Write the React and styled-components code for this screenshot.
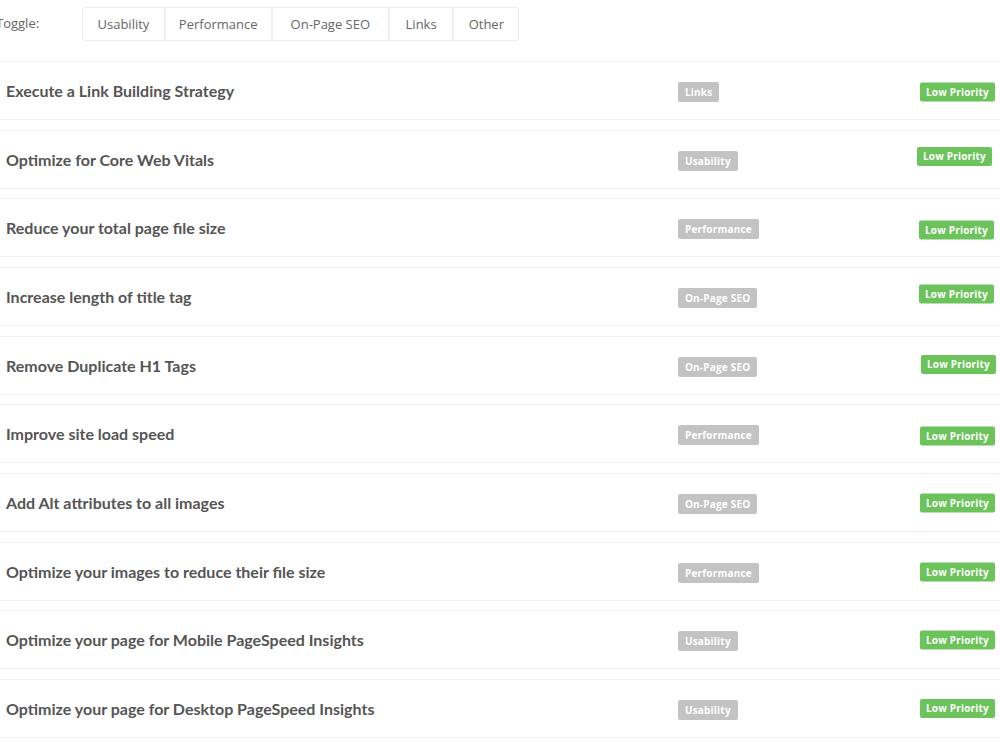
import React from 'react';
import styled, { createGlobalStyle } from 'styled-components';

const GlobalStyle = createGlobalStyle`
  html, body {
    margin: 0;
    padding: 0;
    background: #fff;
  }
  body {
    font-family: "Open Sans", "Liberation Sans", sans-serif;
    overflow: hidden;
  }
`;

const Page = styled.div`
  width: 1000px;
  overflow: hidden;
`;

const ToggleBar = styled.div`
  display: flex;
  align-items: flex-start;
  height: 61px;
  box-sizing: border-box;
  padding-top: 7px;
`;

const ToggleLabel = styled.span`
  width: 86px;
  margin-left: -4px;
  padding-top: 7px;
  font-size: 13px;
  color: #666;
`;

const ButtonGroup = styled.div`
  display: flex;
  border: 1px solid #ebebeb;
  border-radius: 3px;
  height: 34px;
  box-sizing: border-box;
`;

const ToggleButton = styled.button`
  font-family: "Open Sans", "Liberation Sans", sans-serif;
  font-size: 13px;
  color: #666;
  background: #fff;
  border: none;
  border-left: ${p => (p.first ? 'none' : '2px solid #efefef')};
  padding: 0 ${p => p.pad}px;
  cursor: pointer;
`;

const TaskList = styled.div`
  display: flex;
  flex-direction: column;
`;

const TaskRow = styled.div`
  display: flex;
  align-items: center;
  height: 59px;
  box-sizing: border-box;
  margin-bottom: 9.67px;
  border-top: 1px solid #f0f0f0;
  border-bottom: 1px solid #f0f0f0;
  padding: 0 5px 0 6px;
`;

const TaskTitle = styled.div`
  flex: 1;
  font-family: "Lato", "Liberation Sans", sans-serif;
  font-weight: 700;
  font-size: 16px;
  color: #555;
`;

const CategoryCell = styled.div`
  width: 242px;
`;

const Badge = styled.span`
  display: inline-block;
  font-family: "Open Sans", "Liberation Sans", sans-serif;
  font-weight: 700;
  font-size: 10px;
  letter-spacing: 0.2px;
  color: #fff;
  border-radius: 2px;
  box-sizing: border-box;
  line-height: 20px;
  height: 20px;
  padding: 0 7px;
`;

const CategoryBadge = styled(Badge)`
  background: #c3c3c3;
`;

const PriorityBadge = styled(Badge)`
  background: #6cc35b;
  height: 19px;
  line-height: 19px;
  padding: 0 6px;
`;

const buttons = [
  { label: 'Usability', pad: 14.5 },
  { label: 'Performance', pad: 13 },
  { label: 'On-Page SEO', pad: 18 },
  { label: 'Links', pad: 15.5 },
  { label: 'Other', pad: 14.5 },
];

const tasks = [
  { title: 'Execute a Link Building Strategy', category: 'Links', dx: 0, dy: 1.5 },
  { title: 'Optimize for Core Web Vitals', category: 'Usability', dx: -3, dy: -3 },
  { title: 'Reduce your total page file size', category: 'Performance', dx: -1, dy: 2.5 },
  { title: 'Increase length of title tag', category: 'On-Page SEO', dx: -1, dy: -2.5 },
  { title: 'Remove Duplicate H1 Tags', category: 'On-Page SEO', dx: 1, dy: -1 },
  { title: 'Improve site load speed', category: 'Performance', dx: 0, dy: 2.5 },
  { title: 'Add Alt attributes to all images', category: 'On-Page SEO', dx: 0, dy: 0.5 },
  { title: 'Optimize your images to reduce their file size', category: 'Performance', dx: 0, dy: 0.5 },
  { title: 'Optimize your page for Mobile PageSpeed Insights', category: 'Usability', dx: 0, dy: 0.5 },
  { title: 'Optimize your page for Desktop PageSpeed Insights', category: 'Usability', dx: 0, dy: 0 },
];

const App = () => {
  return (
    <Page>
      <GlobalStyle />
      <ToggleBar>
        <ToggleLabel>Toggle:</ToggleLabel>
        <ButtonGroup>
          {buttons.map((b, i) => (
            <ToggleButton key={b.label} first={i === 0} pad={b.pad}>
              {b.label}
            </ToggleButton>
          ))}
        </ButtonGroup>
      </ToggleBar>

      <TaskList>
        {tasks.map(task => (
          <TaskRow key={task.title}>
            <TaskTitle>{task.title}</TaskTitle>
            <CategoryCell>
              <CategoryBadge>{task.category}</CategoryBadge>
            </CategoryCell>
            <PriorityBadge style={{ transform: `translate(${task.dx}px, ${task.dy}px)` }}>
              Low Priority
            </PriorityBadge>
          </TaskRow>
        ))}
      </TaskList>
    </Page>
  );
};

export default App;
